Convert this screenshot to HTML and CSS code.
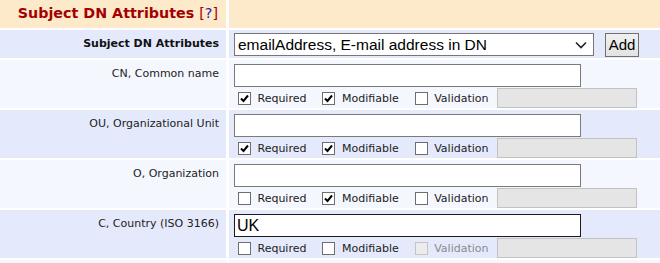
FILE: index.html
```html
<!DOCTYPE html>
<html lang="en">
<head>
    <meta charset="UTF-8">
    <title>Certificate Profile - Subject DN Attributes</title>
    <link rel="stylesheet" href="styles.css">
</head>
<body>
    <div class="profile-grid">
        <div class="cell head label-cell">Subject DN Attributes <span class="help">[<a href="#">?</a>]</span></div>
        <div class="cell head"></div>

        <div class="cell blue label-cell"><b>Subject DN Attributes</b></div>
        <div class="cell blue add-row">
            <div class="fake-select">
                <span>emailAddress, E-mail address in DN</span>
                <svg class="chevron" width="12" height="8" viewBox="0 0 12 8"><path d="M1 1.5 L6 6.5 L11 1.5" fill="none" stroke="#222" stroke-width="1.6"/></svg>
            </div>
            <button class="add-btn">Add</button>
        </div>

        <div class="cell pale label-cell">CN, Common name</div>
        <div class="cell pale">
            <input type="text" class="field">
            <div class="opts">
                <label><input type="checkbox" class="box" checked> Required</label>
                <label><input type="checkbox" class="box" checked> Modifiable</label>
                <label><input type="checkbox" class="box"> Validation</label>
                <input type="text" class="regex" disabled>
            </div>
        </div>

        <div class="cell blue label-cell">OU, Organizational Unit</div>
        <div class="cell blue">
            <input type="text" class="field">
            <div class="opts">
                <label><input type="checkbox" class="box" checked> Required</label>
                <label><input type="checkbox" class="box" checked> Modifiable</label>
                <label><input type="checkbox" class="box"> Validation</label>
                <input type="text" class="regex" disabled>
            </div>
        </div>

        <div class="cell pale label-cell">O, Organization</div>
        <div class="cell pale">
            <input type="text" class="field">
            <div class="opts">
                <label><input type="checkbox" class="box"> Required</label>
                <label><input type="checkbox" class="box" checked> Modifiable</label>
                <label><input type="checkbox" class="box"> Validation</label>
                <input type="text" class="regex" disabled>
            </div>
        </div>

        <div class="cell blue label-cell">C, Country (ISO 3166)</div>
        <div class="cell blue">
            <input type="text" class="field active" value="UK">
            <div class="opts">
                <label><input type="checkbox" class="box"> Required</label>
                <label><input type="checkbox" class="box"> Modifiable</label>
                <label class="off"><input type="checkbox" class="box" disabled> Validation</label>
                <input type="text" class="regex" disabled>
            </div>
        </div>

        <div class="pale"></div>
        <div class="pale"></div>
    </div>
</body>
</html>
```

FILE: styles.css
```css
body {
    margin: 0;
    background-color: #fff;
    font-family: "DejaVu Sans", Verdana, sans-serif;
    font-size: 11px;
    color: #222;
}

.profile-grid {
    display: grid;
    grid-template-columns: 226px 1fr;
    grid-template-rows: 28px 28px 48px 48px 48px 48px 3px;
    gap: 2px 3px;
}

.cell {
    box-sizing: border-box;
    padding: 4px 5px 0 5px;
}

.head {
    background-color: #fdeacb;
}

.blue {
    background-color: #e4eafc;
}

.pale {
    background-color: #f5f7fe;
}

.label-cell {
    text-align: right;
    padding: 7px 7px 0 5px;
}

.head.label-cell {
    padding-top: 5px;
    padding-right: 8px;
    font-size: 14.3px;
    font-weight: bold;
    color: #a50000;
    white-space: nowrap;
}

.help a {
    color: #1a1aa6;
    text-decoration: none;
}

.help {
    font-weight: normal;
}

.label-cell b {
    color: #111;
}

.add-row {
    display: flex;
    align-items: flex-start;
    padding-top: 3px;
}

.fake-select {
    box-sizing: border-box;
    width: 360px;
    height: 23px;
    border: 1px solid #767676;
    background: #fff;
    display: flex;
    align-items: center;
    justify-content: space-between;
    padding: 0 4px 0 3px;
    font-family: "Liberation Sans", Arial, sans-serif;
    font-size: 15.5px;
    color: #000;
}

.chevron {
    margin-right: 2px;
}

.add-btn {
    box-sizing: border-box;
    margin-left: 11px;
    width: 34px;
    height: 24px;
    padding: 0 0 1px 0;
    border: 1px solid #707070;
    background: linear-gradient(#f0f0f0, #e3e3e3);
    font-family: "Liberation Sans", Arial, sans-serif;
    font-size: 15px;
    color: #000;
}

.field {
    display: block;
    box-sizing: border-box;
    width: 347px;
    height: 23px;
    margin: 0;
    border: 1px solid #7a7a7a;
    padding: 0 2px;
    font-family: "Liberation Sans", Arial, sans-serif;
    font-size: 16px;
    color: #000;
    outline: none;
}

.field.active {
    border-color: #1a1a1a;
}

.opts {
    display: flex;
    align-items: center;
    height: 20px;
    margin-top: 1px;
}

.opts label {
    display: flex;
    align-items: center;
    margin-left: 4px;
    margin-right: 12px;
    white-space: pre;
    color: #222;
}

.opts label.off {
    color: #8a8a8a;
}

.box {
    appearance: none;
    -webkit-appearance: none;
    box-sizing: border-box;
    width: 13px;
    height: 13px;
    margin: 0 3px 0 0;
    border: 1px solid #6e6e6e;
    background: #fff;
}

.box:checked {
    background: #fff url("data:image/svg+xml,%3Csvg xmlns='http://www.w3.org/2000/svg' width='11' height='11'%3E%3Cpath d='M2 5.5 L4.5 8 L9 2.5' fill='none' stroke='%23000' stroke-width='2'/%3E%3C/svg%3E") no-repeat center;
}

.box:disabled {
    border-color: #c4c4c4;
    background: #ececec;
}

.regex {
    box-sizing: border-box;
    width: 140px;
    height: 20px;
    margin: 0 0 0 -4px;
    border: 1px solid #c2c2c2;
    background: #e5e5e5;
}
```
